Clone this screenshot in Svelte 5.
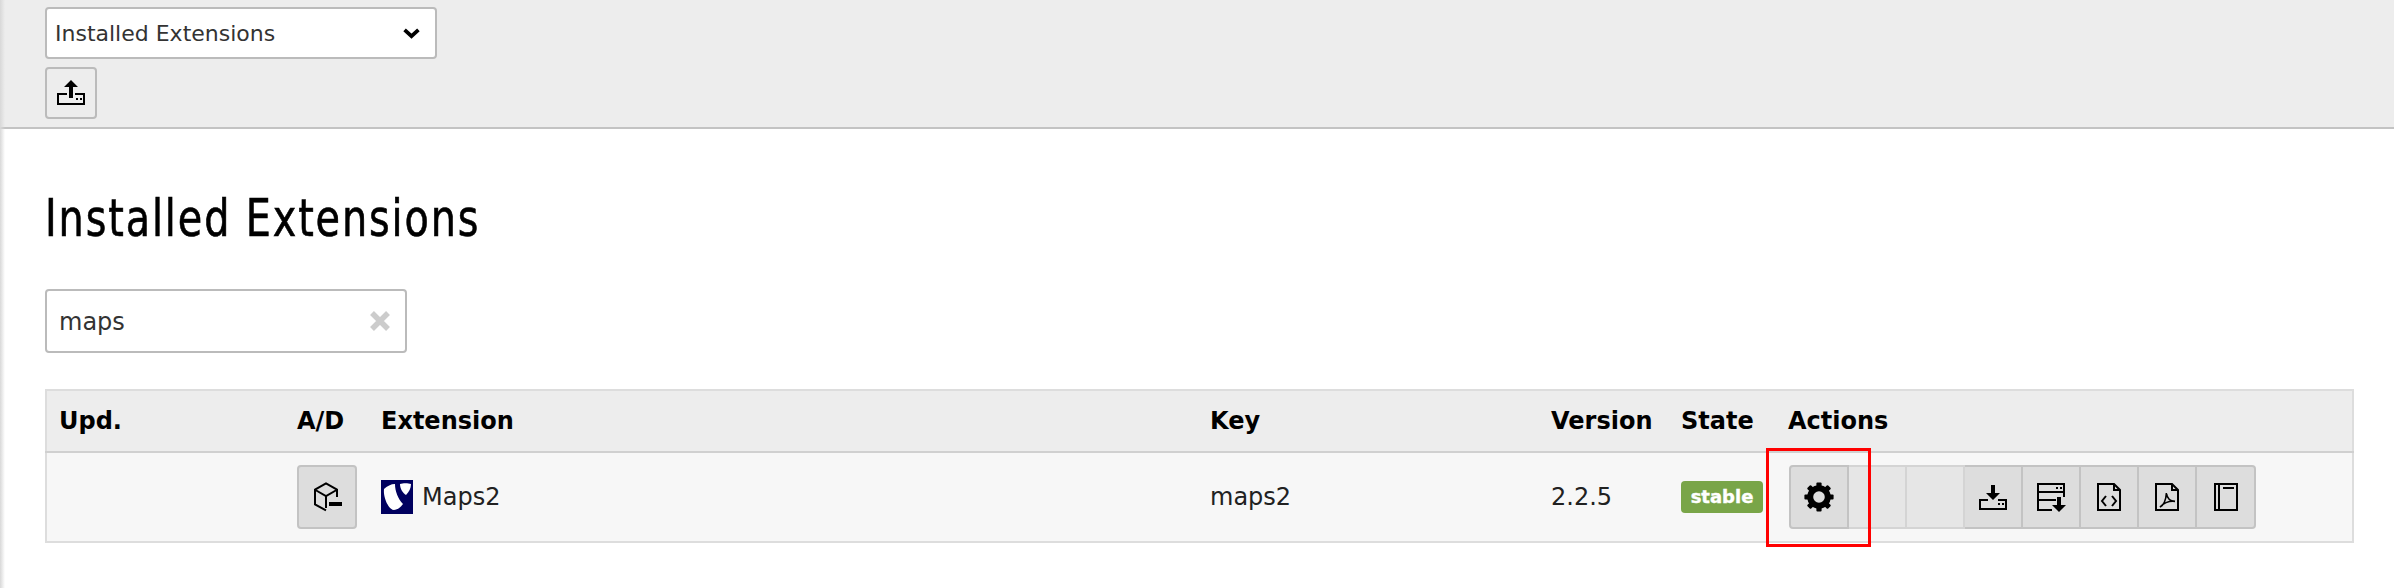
<script>
	const teeth = [0, 45, 90, 135, 180, 225, 270, 315];
</script>

<div class="page">
	<div class="shade"></div>

	<header class="docheader">
		<div class="select">
			<span>Installed Extensions</span>
			<svg class="chevron" viewBox="0 0 16 10" aria-hidden="true">
				<path d="M1.500 1.500L8 7.500l6.500-6" fill="none" stroke="#000" stroke-width="3.500" />
			</svg>
		</div>
		<button class="btn upload" aria-label="Upload">
			<svg class="icon" viewBox="0 0 16 16">
				<path d="M8 1.500L11.500 5H9v5.500H7V5H4.500z" />
				<path d="M6 8.500H1.500v5h13v-5H10" fill="none" stroke="#000" />
				<path d="M10.500 10.500h1v1h-1zM12.500 10.500h1v1h-1z" />
			</svg>
		</button>
	</header>

	<main>
		<h1>Installed Extensions</h1>

		<div class="search">
			<span>maps</span>
			<svg class="clear" viewBox="0 0 20 20" aria-hidden="true">
				<path d="M2 2l16 16M18 2L2 18" stroke="#ccc" stroke-width="5.500" />
			</svg>
		</div>

		<table>
			<thead>
				<tr>
					<th>Upd.</th>
					<th>A/D</th>
					<th>Extension</th>
					<th>Key</th>
					<th>Version</th>
					<th>State</th>
					<th>Actions</th>
				</tr>
			</thead>
			<tbody>
				<tr>
					<td></td>
					<td>
						<button class="btn solo" aria-label="Deactivate">
							<svg class="icon" viewBox="0 0 16 16">
								<path d="M13 8V4.300L7.500 1.200 2 4.300v7.400l5.500 3" fill="none" stroke="#000" />
								<path d="M2.200 4.500l5.300 3 5.300-3M7.500 7.500V13.500" fill="none" stroke="#000" />
								<path d="M9 10.500h6.500v2H9z" />
							</svg>
						</button>
					</td>
					<td>
						<div class="ext">
							<svg class="logo" viewBox="0 0 32 34" aria-hidden="true">
								<rect width="32" height="34" fill="#00005f" />
								<g class="soft">
									<path d="M3 9c3-3 7-5 11-5 0 7 3 15 8 20-2 3-6 6-9 6C8 30 2 18 3 9z" fill="#fff" />
									<path d="M19 4c3-1 8-1 11 0 0 4-2 8-5 11-3-2-6-6-6-11z" fill="#fff" />
								</g>
							</svg>
							Maps2
						</div>
					</td>
					<td>maps2</td>
					<td>2.2.5</td>
					<td><span class="badge">stable</span></td>
					<td>
						<div class="group">
							<button class="btn" aria-label="Configure">
								<svg class="icon" viewBox="0 0 16 16">
									<circle cx="8" cy="8" r="4.400" fill="none" stroke="#000" stroke-width="3" />
									{#each teeth as angle}
										<rect x="6.700" y="0.700" width="2.600" height="3" rx="0.500" transform="rotate({angle} 8 8)" />
									{/each}
								</svg>
							</button>
							<button class="btn empty" aria-label="Empty"></button>
							<button class="btn empty" aria-label="Empty"></button>
							<button class="btn" aria-label="Download">
								<svg class="icon" viewBox="0 0 16 16">
									<path d="M7 2h2v4h2.500L8 9.500 4.500 6H7z" />
									<path d="M5.500 9.500h-4v4.500h13V9.500h-4" fill="none" stroke="#000" />
									<path d="M10.500 11h1v1h-1zM12.500 11h1v1h-1z" />
								</svg>
							</button>
							<button class="btn" aria-label="Export">
								<svg class="icon" viewBox="0 0 16 16">
									<path d="M8.500 14.500h-7v-13h13v6.500M1.500 5.500h13M1.500 9.500h9" fill="none" stroke="#000" />
									<path d="M10.500 3h1v1h-1zM12.500 3h1v1h-1z" />
									<path d="M11 8h2v4h2.500L12 15.500 8.500 12H11z" />
								</svg>
							</button>
							<button class="btn" aria-label="Source">
								<svg class="icon" viewBox="0 0 16 16">
									<path d="M2.500 1.500h8l3 3v10h-11zM10.500 1.500v3h3" fill="none" stroke="#000" />
									<path d="M6.500 7.500L4.500 10l2 2.500M9.500 7.500l2 2.500-2 2.500" fill="none" stroke="#000" />
								</svg>
							</button>
							<button class="btn" aria-label="PDF">
								<svg class="icon" viewBox="0 0 16 16">
									<path d="M2.500 1.500h8l3 3v10h-11zM10.500 1.500v3h3" fill="none" stroke="#000" />
									<path d="M4.500 13c2-1 3-4 3.200-7 .3 2.500 1.500 4 4.300 4.200-2.500-.3-5.500 .8-7.500 2.800z" fill="none" stroke="#000" stroke-width="0.800" />
								</svg>
							</button>
							<button class="btn" aria-label="Manual">
								<svg class="icon" viewBox="0 0 16 16">
									<path d="M2.500 1.500h11v13h-11zM4.500 1.500v13M6.500 3.500h5.500" fill="none" stroke="#000" />
								</svg>
							</button>
						</div>
					</td>
				</tr>
			</tbody>
		</table>
		<div class="highlight"></div>
	</main>
</div>

<style>
	:global(body) {
		background: #fff;
	}
	.page {
		position: relative;
		height: 588px;
		overflow: hidden;
		font-family: "DejaVu Sans", Verdana, sans-serif;
		font-size: 24px;
		color: #212121;
	}
	.shade {
		position: absolute;
		left: 0;
		top: 0;
		bottom: 0;
		width: 5px;
		background: linear-gradient(to right, #d8d8d8, rgba(216, 216, 216, 0));
	}
	.docheader {
		display: flex;
		flex-direction: column;
		align-items: flex-start;
		gap: 8px;
		box-sizing: border-box;
		height: 129px;
		padding: 7px 45px 0;
		background: #ededed;
		border-bottom: 2px solid #c3c3c3;
	}
	.select {
		display: flex;
		align-items: center;
		justify-content: space-between;
		box-sizing: border-box;
		width: 392px;
		height: 52px;
		padding: 0 15px 0 8px;
		background: #fff;
		border: 2px solid #bbb;
		border-radius: 4px;
		font-size: 22px;
		color: #333;
	}
	.chevron {
		width: 17px;
		height: 11px;
	}
	.btn {
		display: flex;
		align-items: center;
		justify-content: center;
		box-sizing: border-box;
		padding: 0;
		background: #ddd;
		border: 2px solid #c3c3c3;
	}
	.icon {
		width: 32px;
		height: 32px;
		display: block;
	}
	.upload {
		width: 52px;
		height: 52px;
		background: #ededed;
		border-color: #bbb;
		border-radius: 4px;
	}
	main {
		padding: 0 40px 0 45px;
	}
	h1 {
		margin: 0;
		padding-top: 59px;
		font-family: "DejaVu Sans Condensed", sans-serif;
		font-size: 52px;
		line-height: 60px;
		font-weight: 400;
		color: #000;
		letter-spacing: 2.2px;
		white-space: nowrap;
		transform: scaleX(0.85);
		transform-origin: left;
		-webkit-text-stroke: 0.6px #000;
	}
	.search {
		display: flex;
		align-items: center;
		justify-content: space-between;
		box-sizing: border-box;
		width: 362px;
		height: 64px;
		margin-top: 41px;
		padding: 2px 15px 0 12px;
		background: #fff;
		border: 2px solid #bbb;
		border-radius: 4px;
		color: #333;
	}
	.clear {
		width: 20px;
		height: 20px;
		margin-top: -2px;
	}
	table {
		width: 2309px;
		margin: 36px 0 0 0;
		border-collapse: collapse;
		table-layout: fixed;
		border: 2px solid #ddd;
	}
	th {
		height: 60px;
		padding: 0 0 0 12px;
		background: #ededed;
		border-bottom: 2px solid #d0d0d0;
		text-align: left;
		font-weight: 700;
		color: #000;
	}
	td {
		height: 90px;
		padding: 0 0 1px 12px;
		box-sizing: border-box;
		background: #f7f7f7;
		color: #212121;
	}
	th:nth-child(1) { width: 226px; }
	th:nth-child(2) { width: 72px; }
	th:nth-child(3) { width: 817px; }
	th:nth-child(4) { width: 329px; }
	th:nth-child(5) { width: 118px; }
	th:nth-child(6) { width: 95px; }
	.solo {
		width: 60px;
		height: 64px;
		border-radius: 4px;
	}
	.ext {
		display: flex;
		align-items: center;
		gap: 9px;
	}
	.logo {
		width: 32px;
		height: 34px;
		flex: none;
	}
	.soft {
		filter: blur(0.7px);
	}
	.badge {
		display: inline-block;
		box-sizing: border-box;
		width: 82px;
		height: 32px;
		line-height: 32px;
		text-align: center;
		background: #79a548;
		border-radius: 4px;
		font-size: 18px;
		font-weight: 700;
		color: #fff;
		vertical-align: middle;
		-webkit-text-stroke: 0.4px #fff;
	}
	.group {
		display: flex;
		margin-left: 1px;
	}
	.group .btn {
		width: 58px;
		height: 64px;
		border-left-width: 0;
	}
	.group .btn:first-child {
		width: 60px;
		border-left-width: 2px;
		border-radius: 4px 0 0 4px;
	}
	.group .btn:last-child {
		width: 59px;
		border-radius: 0 4px 4px 0;
	}
	.group .empty {
		background: #e6e6e6;
		border-color: #d4d4d4;
	}
	.highlight {
		position: absolute;
		left: 1766px;
		top: 448px;
		width: 105px;
		height: 99px;
		box-sizing: border-box;
		border: 3px solid #f00;
	}
</style>
